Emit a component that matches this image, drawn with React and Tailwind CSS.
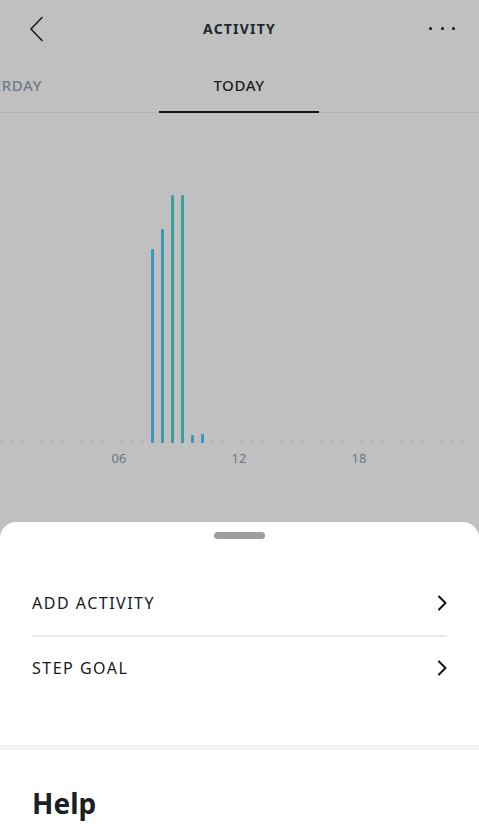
import React from "react";

const bars = {
  15: { h: 194, c: "bg-[#3a97c3]" },
  16: { h: 214, c: "bg-[#3a9bb6]" },
  17: { h: 248, c: "bg-[#3a9f9f]" },
  18: { h: 248, c: "bg-[#3a9f9f]" },
  19: { h: 8, c: "bg-[#3a97c3]" },
  20: { h: 9, c: "bg-[#3a97c3]" },
};

function Chevron() {
  return (
    <svg width="12" height="16" viewBox="0 0 12 16" fill="none">
      <path d="M4 1.5 L10.5 8 L4 14.5" stroke="#111" strokeWidth="2" strokeLinecap="round" strokeLinejoin="round" />
    </svg>
  );
}

export default function App() {
  const slots = Array.from({ length: 48 }, (_, i) => i);
  return (
    <div
      className="w-[479px] h-[827px] overflow-hidden bg-[#c0c0c0] flex flex-col"
      style={{ fontFamily: '"Noto Sans", "Open Sans", sans-serif' }}
    >
      {/* Header */}
      <div className="h-[57px] shrink-0 grid grid-cols-[1fr_auto_1fr] items-center px-[28px]">
        <svg width="16" height="26" viewBox="0 0 16 26" fill="none" className="ml-[1px]">
          <path d="M13 1.5 L2 13 L13 24.5" stroke="#1a1d21" strokeWidth="1.6" strokeLinecap="round" strokeLinejoin="round" />
        </svg>
        <div className="text-[14px] font-bold tracking-[1.2px] text-[#22272c]">ACTIVITY</div>
        <div className="flex items-center justify-end gap-[8.5px] mr-[-4px]">
          <span className="w-[3px] h-[3px] rounded-full bg-[#111]" />
          <span className="w-[3px] h-[3px] rounded-full bg-[#111]" />
          <span className="w-[3px] h-[3px] rounded-full bg-[#111]" />
        </div>
      </div>

      {/* Tabs */}
      <div className="h-[56px] shrink-0 flex border-b border-[#b2b2b2]">
        <div className="w-[42px] overflow-hidden flex justify-end items-center">
          <span className="whitespace-nowrap text-[15px] font-medium tracking-[0.6px] text-[#6e7a84] mt-[2px]">YESTERDAY</span>
        </div>
        <div className="w-[117px]" />
        <div className="w-[160px] flex items-center justify-center border-b-2 border-[#111] mb-[-1px]">
          <span className="text-[15px] font-medium tracking-[0.6px] text-[#1a1d20] mt-[3px]">TODAY</span>
        </div>
      </div>

      {/* Chart */}
      <div className="h-[409px] shrink-0 flex flex-col">
        <div className="h-[330px] flex items-end ml-[-3px]">
          {slots.map((i) => (
            <div key={i} className="w-[10px] shrink-0 flex justify-center items-end">
              {bars[i] ? (
                <div className={`w-[3px] rounded-t-[1px] ${bars[i].c}`} style={{ height: bars[i].h }} />
              ) : (
                <div className="w-[2px] h-[2px] rounded-full bg-[#a6abaf] mb-[1px]" />
              )}
            </div>
          ))}
        </div>
        <div className="flex pl-[107px] gap-[96px] mt-[7px] text-[13px] leading-[16px] text-[#6b7680]">
          <div className="w-[24px] text-center">06</div>
          <div className="w-[24px] text-center">12</div>
          <div className="w-[24px] text-center">18</div>
        </div>
      </div>

      {/* Bottom sheet */}
      <div className="flex-1 bg-white rounded-t-[16px] flex flex-col">
        <div className="mt-[10px] mx-auto w-[51px] h-[7px] rounded-full bg-[#9e9e9e]" />
        <div className="mt-[32px] px-[32px]">
          <div className="h-[64px] flex items-center justify-between">
            <span className="text-[16px] tracking-[1.5px] text-[#16181b]">ADD ACTIVITY</span>
            <Chevron />
          </div>
          <div className="h-[2px] bg-[#e5e8ec]" />
          <div className="h-[62px] flex items-center justify-between">
            <span className="text-[16px] tracking-[1.5px] text-[#16181b]">STEP GOAL</span>
            <Chevron />
          </div>
        </div>
        <div className="mt-[46px] h-[5px] bg-[#f3f3f3]" />
        <div className="px-[32px] pt-[36px]">
          <div className="text-[28px] leading-[34px] font-bold text-[#1c1f24]">Help</div>
        </div>
      </div>
    </div>
  );
}
